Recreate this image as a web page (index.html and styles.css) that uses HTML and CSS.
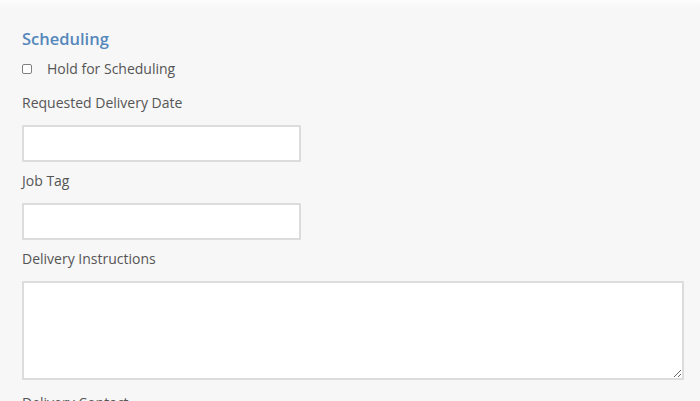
FILE: index.html
```html
<!DOCTYPE html>
<html lang="en">
  <head>
    <meta charset="utf-8" />
    <meta name="viewport" content="width=device-width, initial-scale=1" />
    <title>Scheduling</title>
    <link rel="stylesheet" href="styles.css">
  </head>
  <body>
    <div class="topbar"></div>
    <form class="section">
      <h2 class="section-title">Scheduling</h2>
      <label class="check-row">
        <input type="checkbox" class="check" name="hold">
        <span>Hold for Scheduling</span>
      </label>
      <div class="form-group">
        <label for="deliveryDate">Requested Delivery Date</label>
        <input type="text" id="deliveryDate" class="field short">
      </div>
      <div class="form-group">
        <label for="jobTag">Job Tag</label>
        <input type="text" id="jobTag" class="field short">
      </div>
      <div class="form-group">
        <label for="instructions">Delivery Instructions</label>
        <textarea id="instructions" class="field area"></textarea>
      </div>
      <div class="form-group after-area">
        <label for="contact">Delivery Contact</label>
      </div>
    </form>
  </body>
</html>
```

FILE: styles.css
```css
body {
  margin: 0;
  font-family: 'Open Sans', 'Noto Sans', sans-serif;
  font-size: 14px;
  color: #555;
  background-color: #f7f7f7;
  overflow: hidden;
}

.topbar {
  height: 8px;
  background: linear-gradient(#fdfdfd, #f7f7f7);
}

.section {
  padding: 20px 16px 0 22px;
}

.section-title {
  margin: 0;
  font-size: 16.5px;
  font-weight: 600;
  line-height: 22px;
  color: #5587bb;
}

.check-row {
  display: flex;
  align-items: center;
  gap: 15px;
  height: 18px;
  margin-top: 10px;
  line-height: 18px;
  color: #555;
}

.check {
  appearance: none;
  -webkit-appearance: none;
  flex: none;
  width: 10px;
  height: 10px;
  margin: 0;
  border: 1px solid #808080;
  border-radius: 2px;
  background: white;
  box-sizing: border-box;
}

.form-group {
  margin-top: 16px;
}

.form-group + .form-group {
  margin-top: 10px;
}

.form-group.after-area {
  margin-top: 14px;
}

.form-group label {
  display: block;
  height: 18px;
  line-height: 18px;
  margin-bottom: 13px;
}

.field {
  display: block;
  box-sizing: border-box;
  background: white;
  border: 2px solid #dcdcdc;
  border-radius: 1px;
  font-family: inherit;
  font-size: 14px;
  padding: 6px 8px;
  margin: 0;
}

.field:focus {
  outline: none;
  border-color: #9cbde0;
}

.short {
  width: 279px;
  height: 37px;
}

.area {
  width: 662px;
  height: 99px;
  resize: both;
  vertical-align: top;
}
```
